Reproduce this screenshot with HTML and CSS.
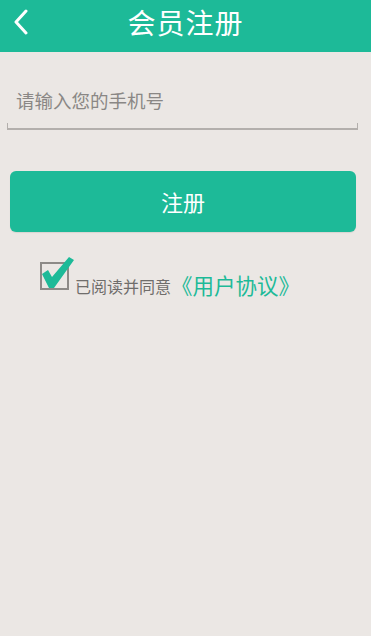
FILE: index.html
```html
<!DOCTYPE html>
<html lang="zh-CN">
<head>
    <meta charset="UTF-8">
    <meta name="viewport" content="width=device-width, initial-scale=1.0">
    <title>会员注册</title>
    <link rel="stylesheet" href="styles.css">
</head>
<body>
    <header class="topbar">
        <a class="back" href="#">
            <svg width="16" height="26" viewBox="0 0 16 26">
                <polyline points="13,2 3,13 13,24" fill="none" stroke="#fff" stroke-width="3" stroke-linecap="round" stroke-linejoin="round"/>
            </svg>
        </a>
        <h1 class="title">会员注册</h1>
    </header>

    <div class="field">
        <input class="phone" type="text" placeholder="请输入您的手机号">
    </div>

    <button class="submit">注册</button>

    <div class="agree">
        <span class="check">
            <svg width="37" height="38" viewBox="0 0 37 38">
                <rect x="3" y="9" width="27" height="26" fill="none" stroke="#8d8a87" stroke-width="2"/>
                <path d="M4 20 L10 16 L14 23 L31 3 L36 6 L16 34 L11 34 Z" fill="#1dba98"/>
            </svg>
        </span>
        <span class="agree-text">已阅读并同意</span>
        <a class="agree-link" href="#">《用户协议》</a>
    </div>
</body>
</html>
```

FILE: styles.css
```css
body {
    margin: 0;
    background: #ebe7e4;
    font-family: "Noto Sans CJK SC", "Noto Sans", sans-serif;
    width: 371px;
    height: 636px;
}

.topbar {
    position: relative;
    height: 52px;
    background: #1dba98;
    display: flex;
    align-items: center;
    justify-content: center;
}

.back {
    position: absolute;
    left: 13px;
    top: 9px;
    display: block;
    height: 26px;
}

.title {
    margin: 0 0 8px 0;
    color: #fff;
    font-size: 28px;
    font-weight: normal;
    letter-spacing: 1px;
    line-height: 36px;
}

.field {
    margin: 24px 13px 0 7px;
    height: 52px;
    border-bottom: 2px solid #b3afac;
    position: relative;
}

.field::before,
.field::after {
    content: "";
    position: absolute;
    bottom: 0;
    width: 1px;
    height: 5px;
    background: #b3afac;
}

.field::before { left: 0; }
.field::after { right: 0; }

.phone {
    border: none;
    background: transparent;
    outline: none;
    width: 100%;
    box-sizing: border-box;
    padding: 0 0 2px 9px;
    height: 50px;
    font-family: inherit;
    font-size: 18.5px;
    color: #555;
}

.phone::placeholder {
    color: #8a8785;
}

.submit {
    display: block;
    margin: 41px 15px 0 10px;
    width: 346px;
    height: 61px;
    border: none;
    border-radius: 6px;
    background: #1dba98;
    color: #fff;
    font-family: inherit;
    font-size: 22px;
    padding: 0 0 2px 0;
    box-shadow: 0 1px 1px rgba(0, 0, 0, 0.08);
}

.agree {
    display: flex;
    align-items: flex-end;
    margin: 22px 0 0 38px;
}

.check {
    display: block;
    height: 38px;
    margin-bottom: 5px;
}

.agree-text {
    font-size: 16px;
    color: #6f6d6b;
    margin: 0 0 1px 0;
    line-height: 20px;
}

.agree-link {
    font-size: 21.5px;
    color: #1dba98;
    text-decoration: none;
    line-height: 25px;
}
```
